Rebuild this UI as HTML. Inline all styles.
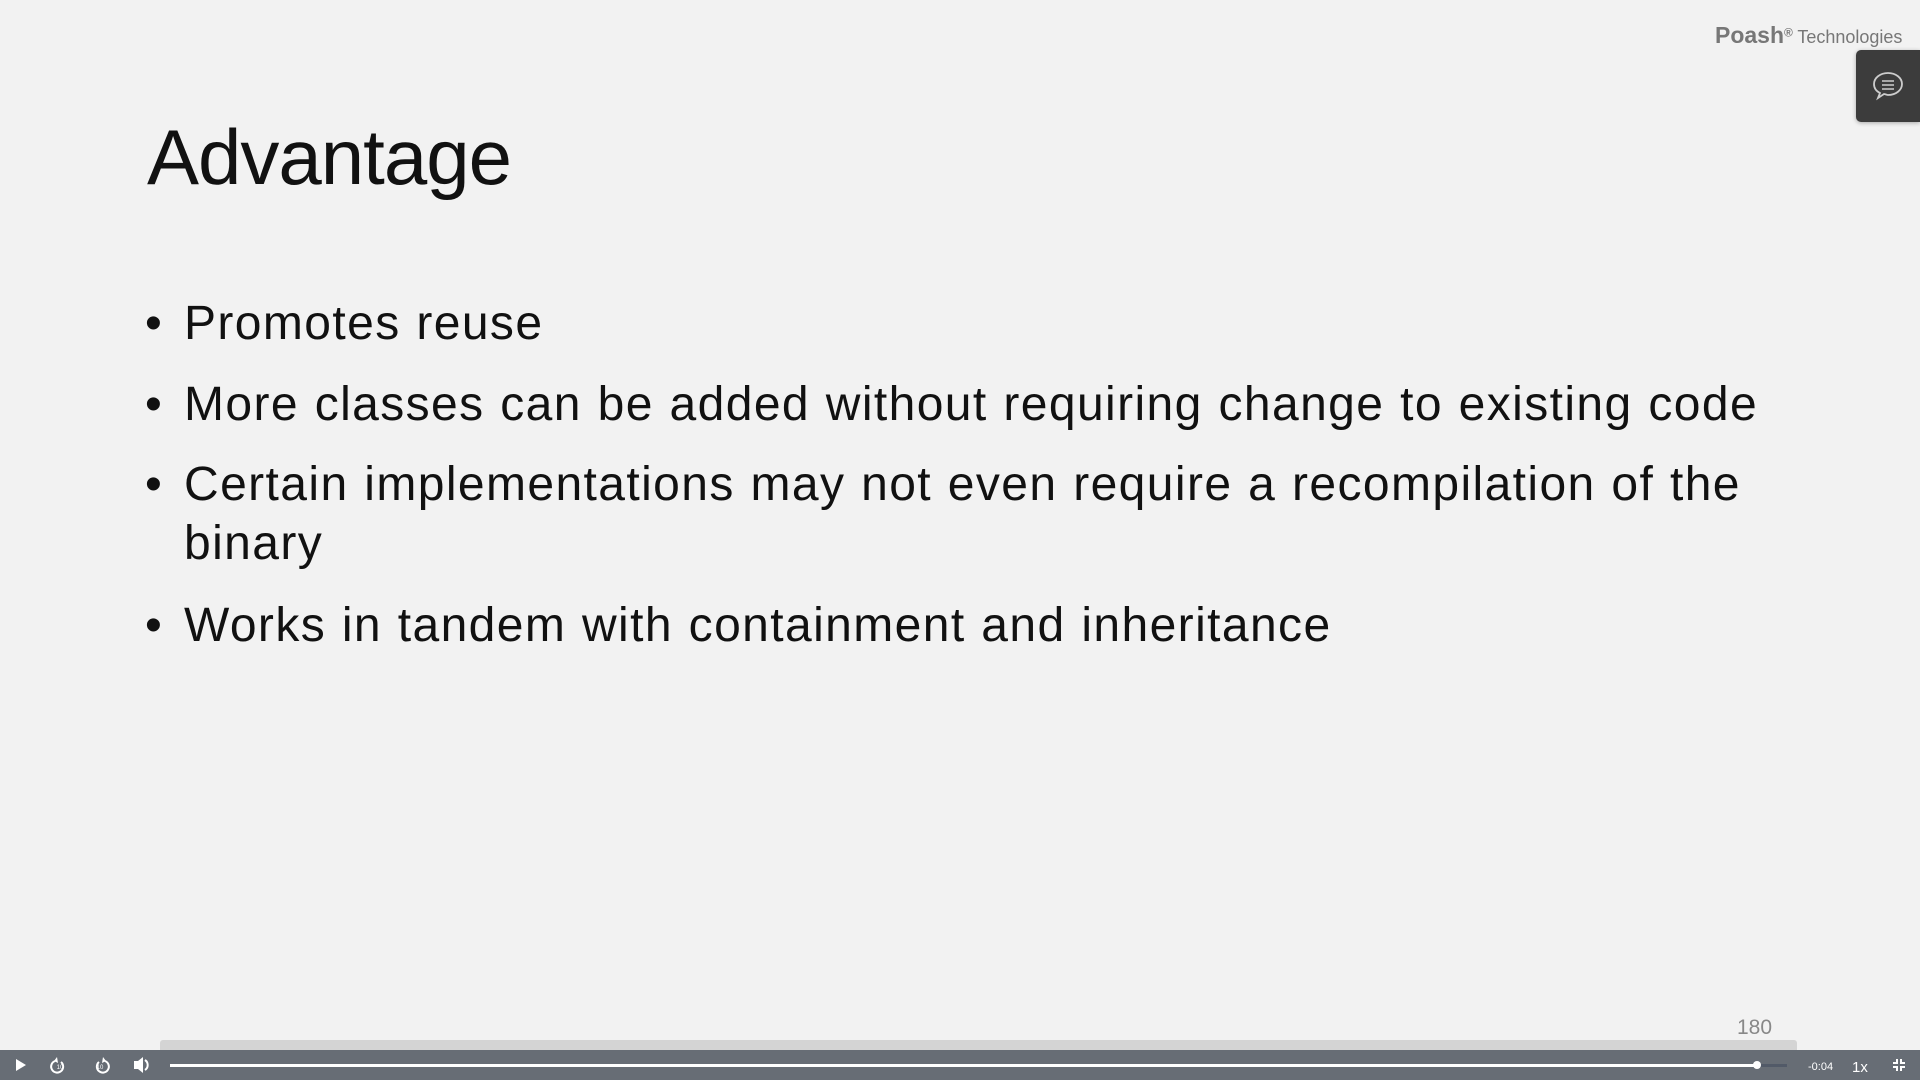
<!DOCTYPE html>
<html><head><meta charset="utf-8"><style>
body{margin:0;width:1920px;height:1080px;background:#f2f2f2;position:relative;overflow:hidden;font-family:"Liberation Sans",sans-serif;}
.t{position:absolute;left:147px;top:112px;font-size:78px;color:#111;letter-spacing:-1px;}
.b{position:absolute;left:184px;font-size:48px;color:#111;white-space:nowrap;letter-spacing:1.4px;word-spacing:1px;}
.b:before{content:"•";position:absolute;left:-39px;}
.b.nb:before{content:""}
.logo{position:absolute;left:1715px;top:22px;color:#777;}
.chat{position:absolute;left:1856px;top:50px;width:64px;height:72px;background:#3c3c3c;border-radius:5px 0 0 5px;box-shadow:0 1px 4px rgba(0,0,0,.3);}
.strip{position:absolute;left:160px;top:1040px;width:1637px;height:10px;background:#d4d4d4;border-radius:3px 3px 0 0;}
.bar{position:absolute;left:0;top:1050px;width:1920px;height:30px;background:#676d75;}
</style></head><body>
<div class="t">Advantage</div>
<div class="b" style="top:296px">Promotes reuse</div>
<div class="b" style="top:377px">More classes can be added without requiring change to existing code</div>
<div class="b" style="top:457px">Certain implementations may not even require a recompilation of the</div>
<div class="b nb" style="top:516px;">binary</div>
<div class="b" style="top:598px">Works in tandem with containment and inheritance</div>
<div class="logo"><span style="font-weight:bold;font-size:23px">Poash</span><sup style="font-size:12px;font-weight:bold">®</sup> <span style="font-size:18px">Technologies</span></div>
<div class="chat"><svg width="64" height="72" viewBox="0 0 64 72"><path d="M32 23c-8 0-14 5-14 11 0 4 2 7 6 9l-2 5 6-4c1 0 3 1 4 1 8 0 14-5 14-11s-6-11-14-11z" fill="none" stroke="#ccc" stroke-width="1.8"/><path d="M26 31h12M26 35h12M26 39h12" stroke="#ccc" stroke-width="1.5"/></svg></div>
<div style="position:absolute;left:1737px;top:1016px;font-size:21px;color:#888">180</div>
<div class="strip"></div>
<div class="bar">
<svg width="1920" height="30" style="position:absolute;left:0;top:0">
<path d="M16 9l10 6-10 6z" fill="#fff"/>
<path d="M55 11a6 6 0 1 0 6 1" fill="none" stroke="#fff" stroke-width="2"/><path d="M57 7l-3 4 4 2z" fill="#fff"/>
<text x="60" y="19" font-size="6" fill="#fff" text-anchor="middle" font-family="Liberation Sans">10</text>
<path d="M105 11a6 6 0 1 1-6 1" fill="none" stroke="#fff" stroke-width="2"/><path d="M103 7l3 4-4 2z" fill="#fff"/>
<text x="100" y="19" font-size="6" fill="#fff" text-anchor="middle" font-family="Liberation Sans">10</text>
<path d="M134 11h4l5-4v16l-5-4h-4z" fill="#fff"/><path d="M145 10a6 6 0 0 1 0 10" fill="none" stroke="#fff" stroke-width="2"/>
<rect x="170" y="14" width="1588" height="3" fill="#fff"/>
<rect x="1758" y="14" width="29" height="3" fill="#525a68"/>
<circle cx="1757" cy="15" r="4" fill="#fff"/>
<text x="1808" y="20" font-size="11" fill="#fff" font-family="Liberation Sans">-0:04</text>
<text x="1852" y="22" font-size="15" fill="#fff" font-family="Liberation Sans">1x</text>
<path d="M1897 9v4h-4M1901 9v4h4M1897 21v-4h-4M1901 21v-4h4" fill="none" stroke="#fff" stroke-width="2"/>
</svg></div>
</body></html>
